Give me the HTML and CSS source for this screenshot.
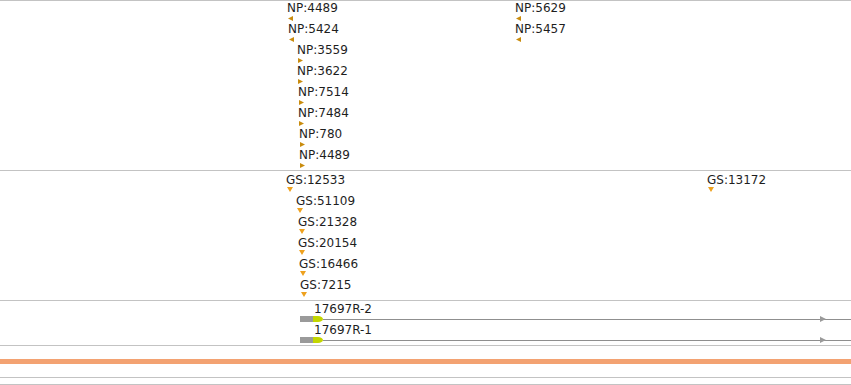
FILE: index.html
```html
<!DOCTYPE html>
<html lang="en">
<head>
    <meta charset="UTF-8">
    <title>Tracks</title>
    <link rel="stylesheet" href="styles.css">
</head>
<body>
    <div class="track track-np">
        <div class="row">
            <div class="feat" style="left:288px"><span class="label">NP:4489</span><div class="marker left np"></div></div>
            <div class="feat" style="left:516px"><span class="label">NP:5629</span><div class="marker left np"></div></div>
        </div>
        <div class="row">
            <div class="feat" style="left:289px"><span class="label">NP:5424</span><div class="marker left np"></div></div>
            <div class="feat" style="left:516px"><span class="label">NP:5457</span><div class="marker left np"></div></div>
        </div>
        <div class="row"><div class="feat" style="left:298px"><span class="label">NP:3559</span><div class="marker right np"></div></div></div>
        <div class="row"><div class="feat" style="left:298px"><span class="label">NP:3622</span><div class="marker right np"></div></div></div>
        <div class="row"><div class="feat" style="left:299px"><span class="label">NP:7514</span><div class="marker right np"></div></div></div>
        <div class="row"><div class="feat" style="left:299px"><span class="label">NP:7484</span><div class="marker right np"></div></div></div>
        <div class="row"><div class="feat" style="left:300px"><span class="label">NP:780</span><div class="marker right np"></div></div></div>
        <div class="row"><div class="feat" style="left:300px"><span class="label">NP:4489</span><div class="marker right np"></div></div></div>
    </div>

    <div class="track track-gs">
        <div class="row">
            <div class="feat" style="left:287px"><span class="label">GS:12533</span><div class="marker down"></div></div>
            <div class="feat" style="left:708px"><span class="label">GS:13172</span><div class="marker down"></div></div>
        </div>
        <div class="row"><div class="feat" style="left:297px"><span class="label">GS:51109</span><div class="marker down"></div></div></div>
        <div class="row"><div class="feat" style="left:299px"><span class="label">GS:21328</span><div class="marker down"></div></div></div>
        <div class="row"><div class="feat" style="left:299px"><span class="label">GS:20154</span><div class="marker down"></div></div></div>
        <div class="row"><div class="feat" style="left:300px"><span class="label">GS:16466</span><div class="marker down"></div></div></div>
        <div class="row"><div class="feat" style="left:301px"><span class="label">GS:7215</span><div class="marker down"></div></div></div>
    </div>

    <div class="track track-tx">
        <div class="row">
            <div class="tx" style="left:300px">
                <span class="tx-label">17697R-2</span>
                <div class="tx-bar">
                    <div class="utr"></div>
                    <div class="cds"></div>
                    <div class="intron"></div>
                    <div class="strand"></div>
                </div>
            </div>
        </div>
        <div class="row">
            <div class="tx" style="left:300px">
                <span class="tx-label">17697R-1</span>
                <div class="tx-bar">
                    <div class="utr"></div>
                    <div class="cds"></div>
                    <div class="intron"></div>
                    <div class="strand"></div>
                </div>
            </div>
        </div>
    </div>

    <div class="coverage"></div>
    <div class="ruler"></div>
</body>
</html>
```

FILE: styles.css
```css
body {
    margin: 0;
    font-family: "DejaVu Sans", sans-serif;
    font-size: 12px;
    color: #1e1e1e;
    background: #fff;
    overflow: hidden;
}

.track {
    border-top: 1px solid #c3c3c3;
}

.track-np {
    padding-bottom: 1px;
}

.track-gs {
    padding: 1px 0 2px;
}

.track-tx {
    padding-bottom: 2px;
    border-bottom: 1px solid #c3c3c3;
}

.row {
    position: relative;
    height: 21px;
}

.feat {
    position: absolute;
    top: 0;
}

.label {
    display: block;
    margin: 1px 0 0 -1px;
    line-height: 13px;
    white-space: nowrap;
}

.track-gs .label {
    margin-top: 2px;
    line-height: 12px;
}

/* feature markers */
.marker {
    margin-top: 1px;
    width: 5px;
    height: 5px;
}

.np {
    background: #c98c0e;
}

.left {
    clip-path: polygon(0 50%, 100% 0, 100% 100%);
}

.right {
    clip-path: polygon(0 0, 100% 50%, 0 100%);
}

.down {
    width: 6px;
    height: 5px;
    background: #eea11e;
    clip-path: polygon(0 0, 100% 0, 50% 100%);
}

/* transcripts */
.tx {
    position: absolute;
    top: 0;
    right: 0;
}

.tx-label {
    display: block;
    margin: 2px 0 0 14px;
    line-height: 13px;
    white-space: nowrap;
}

.tx-bar {
    position: relative;
    display: flex;
    align-items: center;
    height: 6px;
}

.utr {
    width: 13px;
    height: 6px;
    background: #9a9a9a;
}

.cds {
    width: 10px;
    height: 6px;
    background: #c3d600;
    border-radius: 0 5px 5px 0 / 0 3px 3px 0;
}

.intron {
    flex: 1;
    height: 1px;
    background: #8f8f8f;
}

.strand {
    position: absolute;
    right: 25px;
    top: 0;
    width: 6px;
    height: 6px;
    background: #9a9a9a;
    clip-path: polygon(0 0, 100% 50%, 0 100%);
}

/* bottom rulers */
.coverage {
    margin-top: 13px;
    height: 5px;
    background: #f3a272;
}

.ruler {
    margin-top: 13px;
    height: 6px;
    border-top: 1px solid #c3c3c3;
    border-bottom: 1px solid #c3c3c3;
}
```
